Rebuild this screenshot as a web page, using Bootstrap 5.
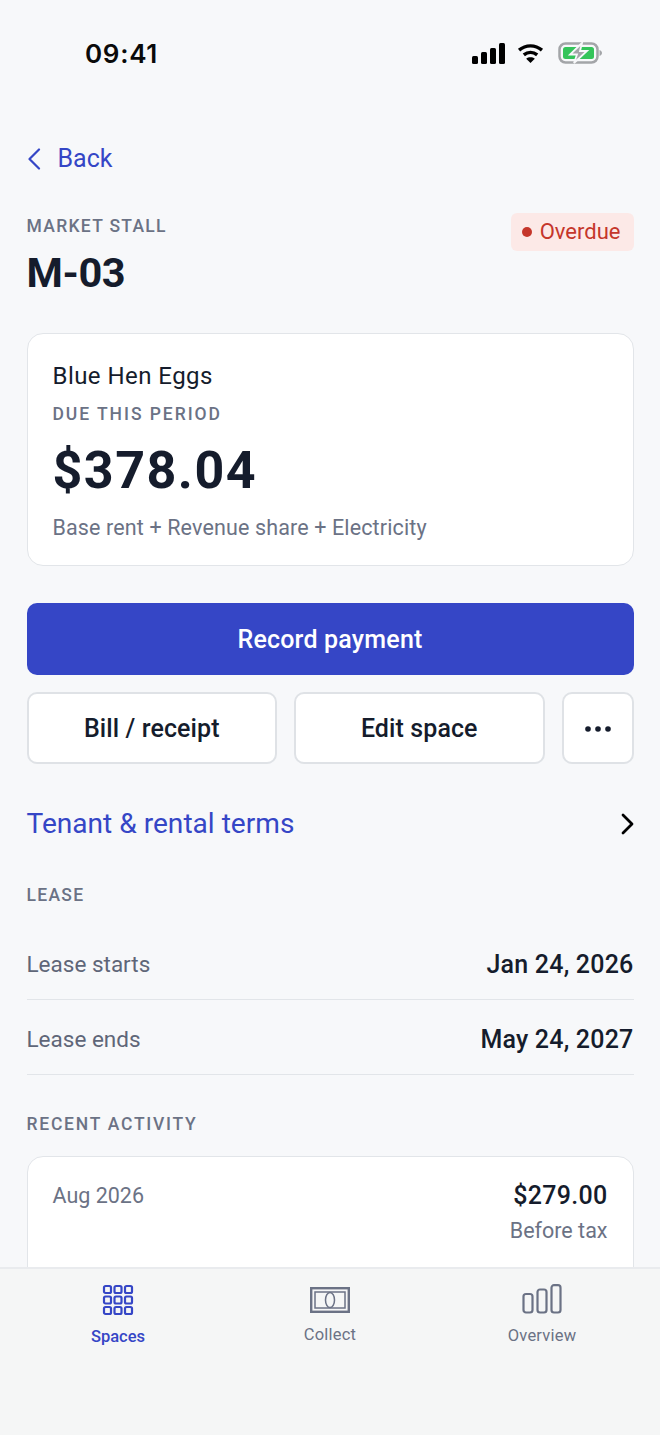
<!DOCTYPE html>
<html lang="en">
<head>
  <meta charset="UTF-8" />
  <meta name="viewport" content="width=device-width, initial-scale=1.0" />
  <title>M-03</title>
  <link href="https://cdn.jsdelivr.net/npm/bootstrap@5.3.0/dist/css/bootstrap.min.css" rel="stylesheet" />
  <style>
    html, body { height: 100%; }
    body {
      background: #f7f8fa;
      color: #151c2c;
      font-family: "Roboto", "Liberation Sans", sans-serif;
      overflow: hidden;
    }
    .screen { height: 1435px; }
    .status-bar { height: 141px; padding: 35px 57px 0 85px; }
    .status-time { font-family: "Inter", sans-serif; font-size: 26px; font-weight: 600; color: #0a0a0a; line-height: 36px; letter-spacing: .7px; margin-top: 1px; }
    .status-icons { height: 36px; gap: 12px; }
    .status-battery { margin-left: 2px; }
    .page-body { padding: 0 26.5px; overflow: hidden; min-height: 0; }
    .back-link { color: #3546c6; font-size: 25px; line-height: 32px; height: 32px; margin-top: 2px; text-decoration: none; gap: 17px; }
    .eyebrow { color: #6b7285; font-size: 17.5px; font-weight: 500; letter-spacing: 1.3px; line-height: 22px; text-transform: uppercase; }
    .title-row { margin-top: 40px; }
    .space-code { font-size: 41.5px; font-weight: 700; line-height: 50px; margin: 11px 0 0; letter-spacing: -.4px; }
    .status-pill { background: #fce9e7; color: #c5362b; font-size: 22px; line-height: 38px; height: 38px; border-radius: 6px; padding: 0 13px 0 11px; gap: 8px; margin-top: -2px; }
    .status-dot { width: 10px; height: 10px; border-radius: 50%; background: #c5362b; }
    .panel { background: #fff; border: 1px solid #e2e5e9; border-radius: 16px; padding: 25px 25px 0; }
    .due-panel { height: 233px; margin-top: 35px; }
    .tenant-name { font-size: 24px; line-height: 32px; letter-spacing: .45px; margin-top: 1px; }
    .due-panel .eyebrow { margin-top: 11px; letter-spacing: 1.95px; }
    .due-amount { font-size: 52px; font-weight: 700; line-height: 62px; margin-top: 15px; letter-spacing: 1.5px; }
    .muted-line { color: #6b7285; font-size: 21.5px; line-height: 30px; }
    .due-panel .muted-line { margin-top: 11px; letter-spacing: .13px; }
    .btn-record { background: #3546c6; border: 0; color: #fff; font-size: 25px; font-weight: 500; letter-spacing: .2px; height: 72px; border-radius: 10px; margin-top: 37px; padding-top: 8px; }
    .btn-record:hover { background: #3546c6; color: #fff; }
    .btn-row { margin-top: 17px; gap: 17px; }
    .btn-plain { background: #fff; border: 2px solid #dfe2e6; color: #151c2c; font-size: 25px; font-weight: 500; letter-spacing: .1px; height: 72px; border-radius: 10px; padding: 1px 0 0; }
    .btn-more { width: 72px; flex: 0 0 72px; }
    .terms-row { margin-top: 42px; height: 36px; }
    .terms-link { color: #3546c6; font-size: 28.1px; line-height: 36px; text-decoration: none; }
    .lease-head { margin-top: 42px; }
    .lease-list { margin-top: 19px; }
    .lease-row { height: 75px; border-bottom: 1px solid #e2e5e9; background: transparent; padding: 5px 0 0; }
    .lease-label { color: #5f6678; font-size: 22.5px; }
    .lease-value { font-size: 25px; font-weight: 500; letter-spacing: .2px; }
    .activity-head { margin-top: 38px; letter-spacing: 1.75px; }
    .activity-panel { margin-top: 21px; height: 160px; padding-top: 24px; }
    .activity-amount { font-size: 25px; font-weight: 500; line-height: 30px; letter-spacing: .3px; }
    .activity-note { margin-top: 5px; }
    .tab-bar { flex: 0 0 168px; background: #f5f6f6; border-top: 2px solid #e9ebee; }
    .tab-item { width: 212px; font-size: 16.5px; font-weight: 400; letter-spacing: .2px; color: #6b7285; text-decoration: none; }
    .tab-item.active { color: #3546c6; font-weight: 500; letter-spacing: 0; }
    .tab-spaces { padding-top: 15px; }
    .tab-collect { padding-top: 18px; }
    .tab-overview { padding-top: 15px; }
    .tab-caption { margin-top: 9px; }
    .tab-collect .tab-caption, .tab-overview .tab-caption { margin-top: 10px; }
  </style>
</head>
<body>
  <div class="screen d-flex flex-column">
    <div class="status-bar d-flex justify-content-between align-items-start flex-shrink-0">
      <span class="status-time">09:41</span>
      <span class="status-icons d-flex align-items-center">
        <svg width="33" height="21" viewBox="0 0 33 21"><rect x="0" y="13" width="6" height="8" rx="1.500" fill="#000"/><rect x="9" y="9" width="6" height="12" rx="1.500" fill="#000"/><rect x="18" y="5" width="6" height="16" rx="1.500" fill="#000"/><rect x="27" y="0" width="6" height="21" rx="1.500" fill="#000"/></svg>
        <svg width="27" height="21" viewBox="0 0 28 22" fill="none" stroke="#000" stroke-width="3.600"><path d="M2 7.500c7-6 17-6 24 0"/><path d="M7 12.500c4.300-3.500 9.700-3.500 14 0"/><path d="M14 21l-4.500-4.600c2.500-2 6.500-2 9 0z" fill="#000" stroke="none"/></svg>
        <svg class="status-battery" width="45" height="22" viewBox="0 0 45 22"><rect x="1.500" y="1.500" width="38" height="19" rx="6" fill="none" stroke="#a3a5a8" stroke-width="2.500"/><rect x="5" y="5" width="31" height="12" rx="2.500" fill="#34c45a"/><path d="M41.500 8v6c1.500-.5 2.500-1.700 2.500-3s-1-2.500-2.500-3z" fill="#a3a5a8"/><path d="M24 1 12 12.500h7L16 21l13-12h-7z" fill="#a3a5a8" stroke="#f7f8fa" stroke-width="1.800"/></svg>
      </span>
    </div>

    <div class="page-body flex-grow-1">
      <a href="#" class="back-link d-flex align-items-center">
        <svg width="14" height="22" viewBox="0 0 14 22" fill="none" stroke="#3546c6" stroke-width="2.200" stroke-linecap="round" stroke-linejoin="round"><path d="M12 1.500 2.500 11l9.500 9.500"/></svg>
        <span>Back</span>
      </a>

      <div class="title-row d-flex justify-content-between align-items-start">
        <div>
          <div class="eyebrow">Market stall</div>
          <h1 class="space-code">M-03</h1>
        </div>
        <span class="status-pill d-flex align-items-center"><span class="status-dot"></span>Overdue</span>
      </div>

      <div class="panel due-panel">
        <div class="tenant-name">Blue Hen Eggs</div>
        <div class="eyebrow">Due this period</div>
        <div class="due-amount">$378.04</div>
        <div class="muted-line">Base rent + Revenue share + Electricity</div>
      </div>

      <button class="btn btn-record w-100 d-block">Record payment</button>
      <div class="btn-row d-flex">
        <button class="btn btn-plain flex-fill w-50">Bill / receipt</button>
        <button class="btn btn-plain flex-fill w-50">Edit space</button>
        <button class="btn btn-plain btn-more d-flex align-items-center justify-content-center" aria-label="More">
          <svg width="26" height="6" viewBox="0 0 26 6" fill="#151c2c"><circle cx="3" cy="3" r="2.800"/><circle cx="13" cy="3" r="2.800"/><circle cx="23" cy="3" r="2.800"/></svg>
        </button>
      </div>

      <div class="terms-row d-flex justify-content-between align-items-center">
        <a href="#" class="terms-link">Tenant &amp; rental terms</a>
        <svg width="14" height="22" viewBox="0 0 14 22" fill="none" stroke="#000" stroke-width="2.800" stroke-linecap="round" stroke-linejoin="round"><path d="M3 2l9 9-9 9"/></svg>
      </div>

      <div class="eyebrow lease-head">Lease</div>
      <div class="list-group list-group-flush lease-list">
        <div class="lease-row d-flex justify-content-between align-items-center"><span class="lease-label">Lease starts</span><span class="lease-value">Jan 24, 2026</span></div>
        <div class="lease-row d-flex justify-content-between align-items-center"><span class="lease-label">Lease ends</span><span class="lease-value">May 24, 2027</span></div>
      </div>

      <div class="eyebrow activity-head">Recent activity</div>
      <div class="panel activity-panel d-flex justify-content-between align-items-start">
        <span class="muted-line">Aug 2026</span>
        <div class="text-end">
          <div class="activity-amount">$279.00</div>
          <div class="muted-line activity-note">Before tax</div>
        </div>
      </div>
    </div>

    <nav class="tab-bar d-flex justify-content-center align-items-start flex-shrink-0">
      <a href="#" class="tab-item tab-spaces active d-flex flex-column align-items-center">
        <svg width="32" height="32" viewBox="0 0 32 32" fill="none" stroke="#3546c6" stroke-width="2.200"><rect x="2" y="2" width="7" height="7" rx="1.500"/><rect x="12.500" y="2" width="7" height="7" rx="1.500"/><rect x="23" y="2" width="7" height="7" rx="1.500"/><rect x="2" y="12.500" width="7" height="7" rx="1.500"/><rect x="12.500" y="12.500" width="7" height="7" rx="1.500"/><rect x="23" y="12.500" width="7" height="7" rx="1.500"/><rect x="2" y="23" width="7" height="7" rx="1.500"/><rect x="12.500" y="23" width="7" height="7" rx="1.500"/><rect x="23" y="23" width="7" height="7" rx="1.500"/></svg>
        <span class="tab-caption">Spaces</span>
      </a>
      <a href="#" class="tab-item tab-collect d-flex flex-column align-items-center">
        <svg width="40" height="26" viewBox="0 0 40 26" fill="none" stroke="#6b7285"><rect x="1.200" y="1.200" width="37.600" height="23.600" stroke-width="2.400"/><rect x="5" y="5" width="30" height="16" stroke-width="1.500"/><ellipse cx="20" cy="13" rx="4.500" ry="7.500" stroke-width="1.500"/></svg>
        <span class="tab-caption">Collect</span>
      </a>
      <a href="#" class="tab-item tab-overview d-flex flex-column align-items-center">
        <svg width="40" height="30" viewBox="0 0 40 30" fill="none" stroke="#6b7285" stroke-width="2.200"><rect x="1.500" y="10" width="9" height="18.500" rx="2.500"/><rect x="15.500" y="5.500" width="9" height="23" rx="2.500"/><rect x="29.500" y="1.200" width="9" height="27.300" rx="2.500"/></svg>
        <span class="tab-caption">Overview</span>
      </a>
    </nav>
  </div>
  <script src="https://cdn.jsdelivr.net/npm/bootstrap@5.3.0/dist/js/bootstrap.bundle.min.js"></script>
</body>
</html>
